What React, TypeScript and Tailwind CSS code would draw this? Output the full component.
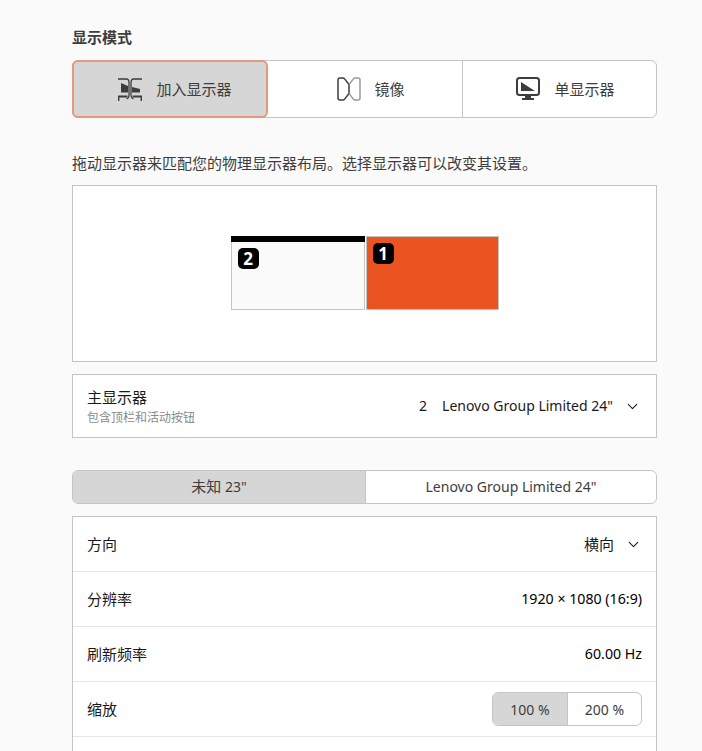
import React from 'react';
import { ChevronDown } from 'lucide-react';

const FONT = "font-['Noto_Sans','Noto_Sans_CJK_SC',sans-serif]";

const JoinIcon = () => (
  <svg width="24" height="24" viewBox="0 0 24 24" fill="none">
    <path d="M0 2h8.500c1.500 0 2.500 1.500 2.500 4v12c0 2.500-1 3.500-2.500 3.500M24 2h-8.500c-1.500 0-2.500 1.500-2.500 4v12c0 2.500 1 3.500 2.500 3.500" stroke="#3d3d3d" strokeWidth="1.3" />
    <path d="M3 6l7 3v6.500H3z" fill="#3d3d3d" />
    <path d="M14 10l8 2v3.500h-8z" fill="#3d3d3d" />
    <path d="M0.500 24v-4.500h9M23.500 24v-4.500h-9" stroke="#3d3d3d" strokeWidth="1.800" />
  </svg>
);

const MirrorIcon = () => (
  <svg width="24" height="24" viewBox="0 0 24 24" fill="none">
    <path d="M12 7.500L7.600 1.900A2 2 0 0 0 6 1H3a2 2 0 0 0-2 2v18a2 2 0 0 0 2 2h3a2 2 0 0 0 1.600-.9L12 16.500z" stroke="#3d3d3d" strokeWidth="1.500" strokeLinejoin="round" />
    <path d="M12 7.500l4.400-5.600A2 2 0 0 1 18 1h3a2 2 0 0 1 2 2v18a2 2 0 0 1-2 2h-3a2 2 0 0 1-1.600-.9L12 16.500" stroke="#9a9a9a" strokeWidth="1.500" strokeLinejoin="round" />
  </svg>
);

const SingleIcon = () => (
  <svg width="24" height="24" viewBox="0 0 24 24" fill="none">
    <rect x="1" y="1" width="22" height="17" rx="2.500" stroke="#3d3d3d" strokeWidth="2" />
    <path d="M5 5l14 9H5z" fill="#3d3d3d" />
    <path d="M9 19h6v2h3v2H6v-2h3z" fill="#3d3d3d" />
  </svg>
);

const Badge = ({ n }: { n: number }) => (
  <div className="flex h-[21px] w-[21px] items-center justify-center rounded-[5px] bg-black text-[17px] leading-none font-bold text-white">
    {n}
  </div>
);

const Chevron = () => <ChevronDown size={17} strokeWidth={1.5} className="ml-[11px]" />;

const Row = ({ label, children, last }: { label: string; children: React.ReactNode; last?: boolean }) => (
  <div className={`flex h-[55px] items-center justify-between px-[14px] ${last ? '' : 'border-b border-[#e6e6e6]'}`}>
    <span className="text-[15px] text-[#1a1a1a]">{label}</span>
    {children}
  </div>
);

export default function App() {
  return (
    <div className={`h-[751px] overflow-hidden bg-[#fafafa] pl-[72px] pt-[26px] ${FONT}`}>
      <div className="w-[585px]">
        <h2 className="h-[22px] text-[15px] leading-[22px] font-bold text-[#3d3d3d]">显示模式</h2>

        <div className="mt-[12px] flex h-[58px] rounded-[6px] border border-[#c4c4c4] bg-white text-[15px] text-[#3d3d3d]">
          <div className="-m-px flex w-[196px] items-center justify-center gap-[14px] rounded-[6px] border-2 border-[#e59880] bg-[#d6d6d6] pl-[10px]">
            <JoinIcon />
            <span>加入显示器</span>
          </div>
          <div className="flex flex-1 items-center justify-center gap-[13px] border-r border-[#c4c4c4] pl-[13px]">
            <MirrorIcon />
            <span>镜像</span>
          </div>
          <div className="flex w-[193px] items-center justify-center gap-[14px] pl-[12px]">
            <SingleIcon />
            <span>单显示器</span>
          </div>
        </div>

        <p className="mt-[33px] h-[24px] text-[15px] leading-[24px] text-[#3d3d3d]">
          拖动显示器来匹配您的物理显示器布局。选择显示器可以改变其设置。
        </p>

        <div className="mt-[10px] flex h-[177px] justify-center gap-px border border-[#c4c4c4] bg-white pt-[50px]">
          <div className="h-[74px] w-[134px] border border-[#c4c4c4] bg-[#fafafa]">
            <div className="-mx-px -mt-px h-[6px] bg-black" />
            <div className="pl-[6px] pt-[6px]">
              <Badge n={2} />
            </div>
          </div>
          <div className="h-[74px] w-[133px] border border-[#c4c4c4] bg-[#e95420] pl-[6px] pt-[6px]">
            <Badge n={1} />
          </div>
        </div>

        <div className="mt-[12px] flex h-[64px] items-center justify-between border border-[#c4c4c4] bg-white pl-[14px] pr-[15px]">
          <div>
            <div className="text-[15px] leading-[20px] text-[#1a1a1a]">主显示器</div>
            <div className="mt-[3px] text-[12px] leading-[16px] text-[#8a8a8a]">包含顶栏和活动按钮</div>
          </div>
          <div className="flex items-center text-[14px] text-[#1a1a1a]">
            <span className="mr-[15px] -translate-y-px">2</span>
            <span className="-translate-y-px">Lenovo Group Limited 24"</span>
            <Chevron />
          </div>
        </div>

        <div className="mt-[32px] flex h-[34px] overflow-hidden rounded-[6px] border border-[#c4c4c4] bg-white text-[14px] leading-[18px] text-[#3d3d3d]">
          <div className="flex w-[293px] items-center justify-center border-r border-[#c4c4c4] bg-[#d6d6d6]">
            <div className="-translate-y-px">
              <span className="text-[15px]">未知</span>&nbsp;23"
            </div>
          </div>
          <div className="flex flex-1 items-center justify-center">Lenovo Group Limited 24"</div>
        </div>

        <div className="mt-[12px] border border-[#c4c4c4] bg-white">
          <Row label="方向">
            <div className="flex items-center text-[15px] text-[#1a1a1a]">
              <span>横向</span>
              <Chevron />
            </div>
          </Row>
          <Row label="分辨率">
            <span className="text-[14.2px] text-black">1920 × 1080 (16:9)</span>
          </Row>
          <Row label="刷新频率">
            <span className="text-[14.2px] text-black">60.00 Hz</span>
          </Row>
          <Row label="缩放">
            <div className="flex h-[34px] w-[150px] overflow-hidden rounded-[6px] border border-[#c4c4c4] text-[14px] text-[#3d3d3d]">
              <div className="flex w-[75px] items-center justify-center border-r border-[#c4c4c4] bg-[#d6d6d6]">100 %</div>
              <div className="flex flex-1 items-center justify-center">200 %</div>
            </div>
          </Row>
          <div className="h-[55px]" />
        </div>
      </div>
    </div>
  );
}
